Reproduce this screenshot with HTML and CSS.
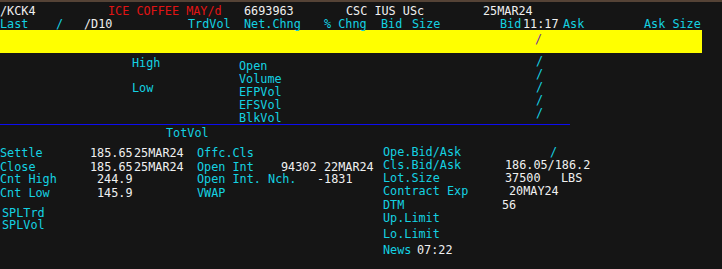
FILE: index.html
```html
<!DOCTYPE html>
<html lang="en">
<head>
    <meta charset="UTF-8">
    <meta name="viewport" content="width=device-width, initial-scale=1.0">
    <title>KCK4 - ICE Coffee</title>
    <link rel="stylesheet" href="styles.css">
</head>
<body>
    <div class="row row-title">
        <span class="white">/KCK4</span>
        <span class="red">ICE COFFEE MAY/d</span>
        <span class="white">6693963</span>
        <span class="white">CSC IUS USc</span>
        <span class="white">25MAR24</span>
    </div>
    <div class="row row-head">
        <span>Last</span>
        <span>/</span>
        <span class="white">/D10</span>
        <span>TrdVol</span>
        <span>Net.Chng</span>
        <span>% Chng</span>
        <span>Bid</span>
        <span>Size</span>
        <span>Bid</span>
        <span class="white">11:17</span>
        <span>Ask</span>
        <span>Ask Size</span>
    </div>

    <div class="ticker"><span>/</span></div>

    <div class="quote">
        <div class="hilo">
            <div>High</div>
            <div class="low">Low</div>
        </div>
        <div class="vols">
            <div>Open</div>
            <div>Volume</div>
            <div>EFPVol</div>
            <div>EFSVol</div>
            <div>BlkVol</div>
        </div>
        <div class="slashes">
            <div>/</div>
            <div>/</div>
            <div>/</div>
            <div>/</div>
            <div>/</div>
        </div>
    </div>
    <div class="rule"></div>

    <div class="totvol">TotVol</div>

    <div class="lower">
        <div class="stats">
            <div class="row row-a settle">
                <span>Settle</span>
                <span class="white">185.65</span>
                <span class="white">25MAR24</span>
                <span>Offc.Cls</span>
            </div>
            <div class="row row-a close">
                <span>Close</span>
                <span class="white">185.65</span>
                <span class="white">25MAR24</span>
                <span>Open Int</span>
                <span class="white">94302</span>
                <span class="white">22MAR24</span>
            </div>
            <div class="row row-b">
                <span>Cnt High</span>
                <span class="white">244.9</span>
                <span>Open Int. Nch.</span>
                <span class="white">-1831</span>
            </div>
            <div class="row row-b cnt-low">
                <span>Cnt Low</span>
                <span class="white">145.9</span>
                <span>VWAP</span>
            </div>
            <div class="row spl spl-trd">SPLTrd</div>
            <div class="row spl">SPLVol</div>
        </div>

        <div class="detail">
            <div class="row d-ope">
                <span>Ope.Bid/Ask</span>
                <span>/</span>
            </div>
            <div class="row d-cls">
                <span>Cls.Bid/Ask</span>
                <span class="white">186.05/186.2</span>
            </div>
            <div class="row d-lot">
                <span>Lot.Size</span>
                <span class="white">37500</span>
                <span class="white">LBS</span>
            </div>
            <div class="row d-exp">
                <span>Contract Exp</span>
                <span class="white">20MAY24</span>
            </div>
            <div class="row d-dtm">
                <span>DTM</span>
                <span class="white">56</span>
            </div>
            <div class="row d-up">Up.Limit</div>
            <div class="row d-lo">Lo.Limit</div>
            <div class="row d-news">
                <span>News</span>
                <span class="white">07:22</span>
            </div>
        </div>
    </div>
</body>
</html>
```

FILE: styles.css
```css
:root {
    --bg-color: #151515;
    --label-color: #14d2e2;
    --value-color: #f0f0f0;
    --alert-color: #e01414;
    --ticker-bg: #ffff00;
    --ticker-text: #7030a0;
    --rule-color: #0c0cf0;
    --frame-color: #554336;
}

body {
    margin: 0;
    height: 267px;
    overflow: hidden;
    background-color: var(--bg-color);
    border-top: 2px solid var(--frame-color);
    color: var(--label-color);
    font-family: "DejaVu Sans Mono", monospace;
    font-size: 11.8px;
    line-height: 12px;
}

.white {
    color: var(--value-color);
}

.red {
    color: var(--alert-color);
}

.row {
    display: grid;
    height: 12px;
    white-space: pre;
}

/* header */
.row-title {
    margin-top: 3px;
    grid-template-columns: 108px 136px 102px 137px auto;
}

.row-head {
    margin-top: 1px;
    grid-template-columns: 56px 28px 104px 56px 80px 57px 31px 88px 23px 40px 81px auto;
}

.ticker {
    width: 702px;
    height: 23px;
    box-sizing: border-box;
    padding: 3px 0 0 535px;
    background-color: var(--ticker-bg);
    color: var(--ticker-text);
}

/* quote block */
.quote {
    display: flex;
    height: 71px;
    line-height: 13px;
}

.hilo {
    width: 107px;
    margin-left: 132px;
    padding-top: 4px;
}

.hilo .low {
    margin-top: 12px;
}

.vols {
    width: 297px;
    padding-top: 7px;
}

.slashes {
    padding-top: 2px;
}

.rule {
    width: 570px;
    height: 1px;
    background-color: var(--rule-color);
}

.totvol {
    margin-top: 2px;
    height: 13px;
    line-height: 13px;
    padding-left: 166px;
}

/* lower stats */
.lower {
    display: flex;
}

.stats {
    width: 383px;
}

.row-a {
    grid-template-columns: 90px 44px 63px 84px 43px auto;
}

.row-b {
    grid-template-columns: 97px 100px 120px auto;
}

.settle {
    margin-top: 7px;
}

.close,
.cnt-low {
    margin-top: 2px;
}

.spl {
    padding-left: 2px;
}

.spl-trd {
    margin-top: 8px;
}

.detail .row {
    margin-top: 1px;
}

.detail .d-ope {
    margin-top: 6px;
    grid-template-columns: 167px auto;
}

.d-cls {
    grid-template-columns: 122px auto;
}

.d-lot {
    grid-template-columns: 122px 56px auto;
}

.d-exp {
    grid-template-columns: 126px auto;
}

.detail .d-dtm {
    margin-top: 2px;
    grid-template-columns: 119px auto;
}

.detail .d-lo,
.detail .d-news {
    margin-top: 4px;
}

.d-news {
    grid-template-columns: 34px auto;
}
```
